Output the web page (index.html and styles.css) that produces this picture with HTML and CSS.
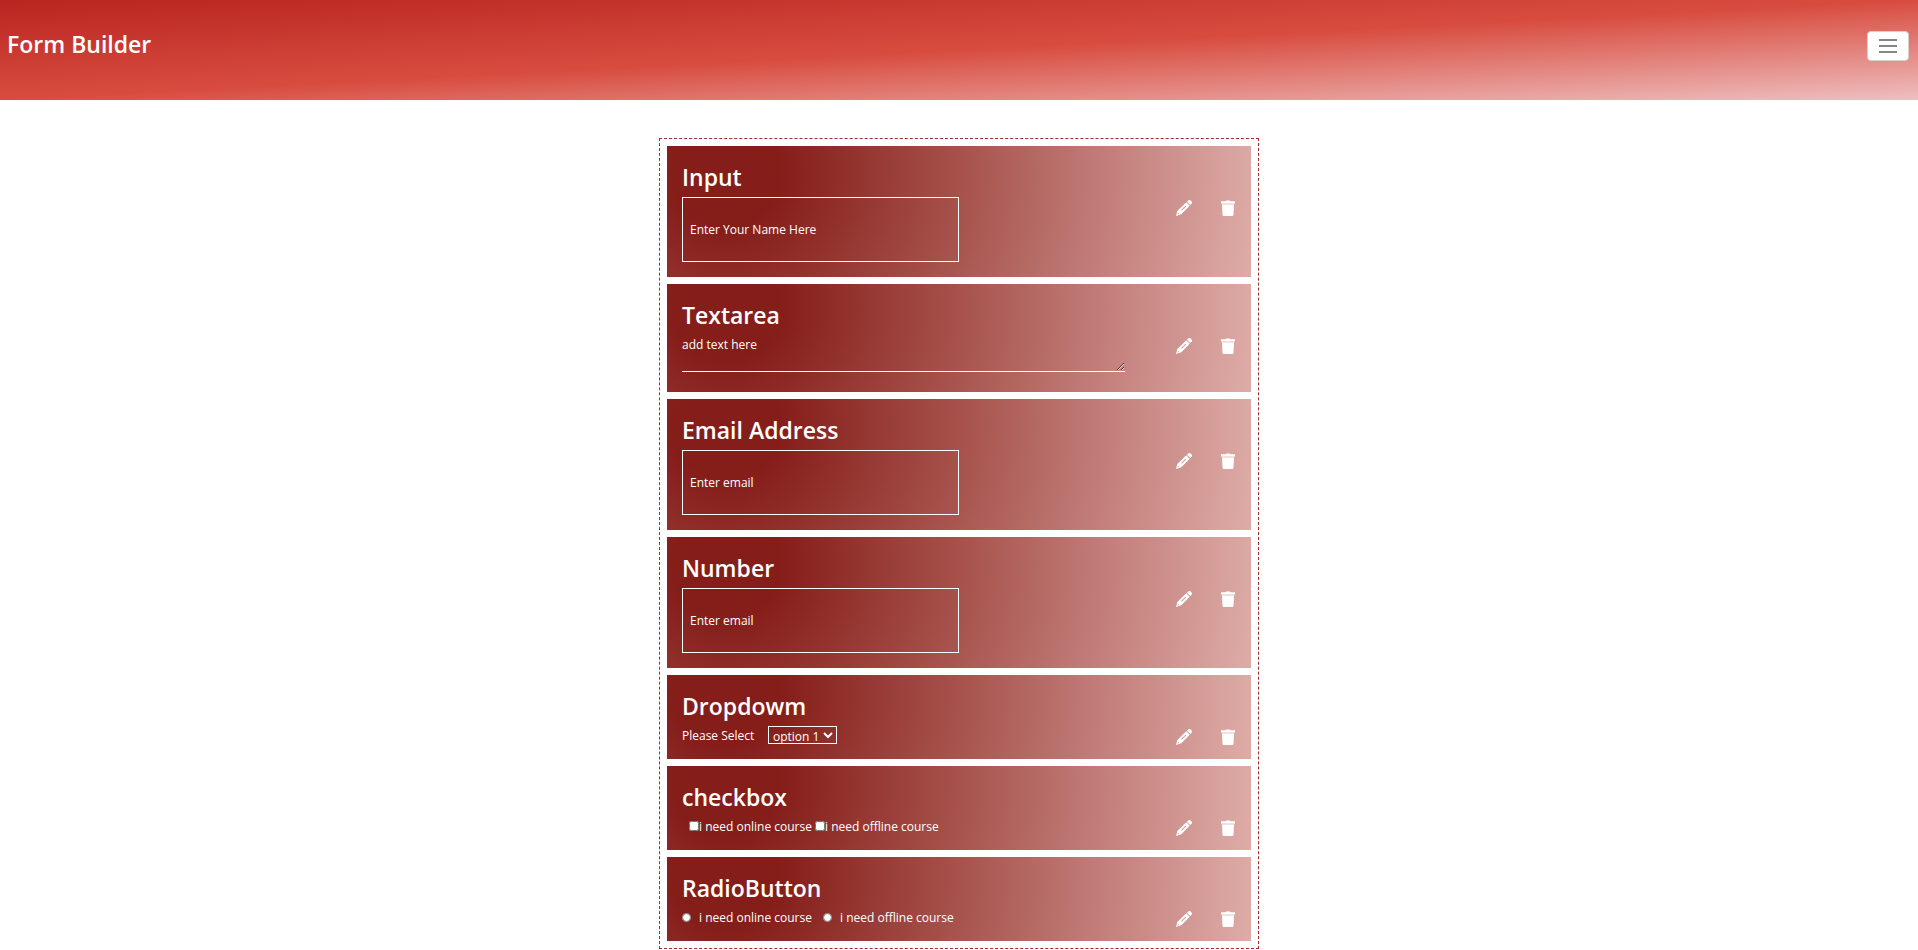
FILE: index.html
```html
<!DOCTYPE html>
<html lang="en">
<head>
<meta charset="utf-8">
<title>Form Builder</title>
<link rel="stylesheet" href="styles.css">
</head>
<body>
<svg class="sprite" aria-hidden="true">
  <symbol id="pencil" viewBox="0 0 16 16"><path fill-rule="evenodd" d="M10.300 2.300L13.700 5.700 5.300 14.200 0 16 1.300 11.100zM5.200 10.100L9.500 5.800 10.100 6.400 5.800 10.700zM1.900 12.900L1.500 14.500 3.100 14.100z"/><path d="M11 1.800L12.300.5a1.600 1.600 0 0 1 2.300 0l.9.900a1.600 1.600 0 0 1 0 2.300L14.200 5z"/></symbol>
  <symbol id="trash" viewBox="0 0 16 16"><path d="M1 1.300h4.500L6.200.5h3.600l.7.800H15v2.300H1z"/><path d="M1.800 3.500h12.400v1H1.800z" opacity=".65"/><path d="M2 4.500h12l-.5 10.300A1.300 1.300 0 0 1 12.200 16H3.800a1.300 1.300 0 0 1-1.300-1.200z"/></symbol>
</svg>
<header class="topbar">
  <h1 class="brand">Form Builder</h1>
  <button class="toggler" type="button" aria-label="Toggle navigation">
    <svg viewBox="0 0 18 14" width="18" height="14" aria-hidden="true"><path d="M0 1h18M0 7h18M0 13h18"/></svg>
  </button>
</header>
<main class="canvas">
  <section class="card">
    <div class="content">
      <h2 class="title"><label for="name">Input</label></h2>
      <input class="text-field" id="name" type="text" placeholder="Enter Your Name Here">
    </div>
    <div class="actions">
      <button type="button" aria-label="Edit"><svg><use href="#pencil"/></svg></button>
      <button type="button" aria-label="Delete"><svg><use href="#trash"/></svg></button>
    </div>
  </section>
  <section class="card">
    <div class="content">
      <h2 class="title"><label for="notes">Textarea</label></h2>
      <textarea class="text-area" id="notes" placeholder="add text here"></textarea>
    </div>
    <div class="actions">
      <button type="button" aria-label="Edit"><svg><use href="#pencil"/></svg></button>
      <button type="button" aria-label="Delete"><svg><use href="#trash"/></svg></button>
    </div>
  </section>
  <section class="card">
    <div class="content">
      <h2 class="title"><label for="email">Email Address</label></h2>
      <input class="text-field" id="email" type="email" placeholder="Enter email">
    </div>
    <div class="actions">
      <button type="button" aria-label="Edit"><svg><use href="#pencil"/></svg></button>
      <button type="button" aria-label="Delete"><svg><use href="#trash"/></svg></button>
    </div>
  </section>
  <section class="card">
    <div class="content">
      <h2 class="title"><label for="number">Number</label></h2>
      <input class="text-field" id="number" type="number" placeholder="Enter email">
    </div>
    <div class="actions">
      <button type="button" aria-label="Edit"><svg><use href="#pencil"/></svg></button>
      <button type="button" aria-label="Delete"><svg><use href="#trash"/></svg></button>
    </div>
  </section>
  <section class="card">
    <div class="content">
      <h2 class="title">Dropdowm</h2>
      <div class="row">
        <label class="select-label" for="choice">Please Select</label>
        <select class="select" id="choice"><option>option 1</option><option>option 2</option></select>
      </div>
    </div>
    <div class="actions">
      <button type="button" aria-label="Edit"><svg><use href="#pencil"/></svg></button>
      <button type="button" aria-label="Delete"><svg><use href="#trash"/></svg></button>
    </div>
  </section>
  <section class="card">
    <div class="content">
      <h2 class="title">checkbox</h2>
      <div class="row check-row">
        <label class="option"><input type="checkbox"><span>i need online course</span></label>
        <label class="option"><input type="checkbox"><span>i need offline course</span></label>
      </div>
    </div>
    <div class="actions">
      <button type="button" aria-label="Edit"><svg><use href="#pencil"/></svg></button>
      <button type="button" aria-label="Delete"><svg><use href="#trash"/></svg></button>
    </div>
  </section>
  <section class="card">
    <div class="content">
      <h2 class="title">RadioButton</h2>
      <div class="row radio-row">
        <label class="option"><input type="radio" name="course"><span>i need online course</span></label>
        <label class="option"><input type="radio" name="course"><span>i need offline course</span></label>
      </div>
    </div>
    <div class="actions">
      <button type="button" aria-label="Edit"><svg><use href="#pencil"/></svg></button>
      <button type="button" aria-label="Delete"><svg><use href="#trash"/></svg></button>
    </div>
  </section>
</main>
</body>
</html>
```
FILE: styles.css
```css
* { box-sizing: border-box; }
body {
  margin: 0;
  background: #fff;
  color: #fff;
  font-family: "Segoe UI", "Open Sans", "Noto Sans", sans-serif;
  font-size: 12px;
  line-height: 18px;
}
.sprite { display: none; }
h1, h2 { margin: 0; }
input, select, textarea, button { font: inherit; color: inherit; margin: 0; }

.topbar {
  display: flex;
  align-items: center;
  justify-content: space-between;
  height: 100px;
  padding: 0 9px 8px 7px;
  background: linear-gradient(to bottom right, #b92520 0%, #d84c3f 50%, #eebfc0 100%);
}
.brand { padding-bottom: 4px; font-size: 23px; line-height: 32px; font-weight: 600; }
.toggler {
  display: flex;
  align-items: center;
  justify-content: center;
  width: 42px;
  height: 30px;
  padding: 0;
  border: 1px solid #d9cfcf;
  border-radius: 4px;
  background: #fff;
}
.toggler path { stroke: #86868a; stroke-width: 2; }

.canvas {
  display: grid;
  gap: 7px;
  width: 600px;
  max-width: 100%;
  margin: 38px auto 0;
  padding: 7px;
  border: 1px dashed #a52a2a;
}
.card {
  display: flex;
  justify-content: space-between;
  padding: 15px;
  background: radial-gradient(circle farthest-corner at 10% 20%, #851e1a 0%, #851d19 10%, #a9554f 46%, #b86f69 62%, #bd7572 66%, #deaca7 100%);
}
.content { flex: 1; }
.title { margin-bottom: 4px; font-size: 23px; line-height: 32px; font-weight: 600; }
.text-field {
  display: block;
  width: 50%;
  height: 65px;
  padding: 0 7px;
  border: 1px solid #fff;
  background: transparent;
}
.text-area {
  display: block;
  width: 80%;
  height: 37px;
  margin-bottom: 5px;
  padding: 1px 0 0;
  border: 0;
  border-bottom: 1px solid #fff;
  background: transparent;
  overflow: hidden;
}
::placeholder { color: #fff; opacity: 1; }

.row { display: flex; align-items: center; height: 18px; }
.select-label { width: 86px; padding-top: 2px; }
.select {
  width: 69px;
  height: 18px;
  padding: 0;
  border: 1px solid #fff;
  background: transparent;
  line-height: 16px;
}
.select option { color: #000; }
.option { display: flex; align-items: center; }
.option span { padding-top: 2px; }
.check-row { gap: 3px; padding-left: 7px; }
.check-row input { width: 10px; height: 10px; }
.radio-row { gap: 11px; }
.radio-row input { width: 9px; height: 9px; margin-right: 8px; }

.actions { display: flex; align-items: flex-start; gap: 28px; margin-left: -60px; padding-top: 39px; height: 18px; }
.actions button { display: block; padding: 0; border: 0; background: none; }
.actions svg { display: block; width: 16px; height: 16px; fill: #fff; }
```
